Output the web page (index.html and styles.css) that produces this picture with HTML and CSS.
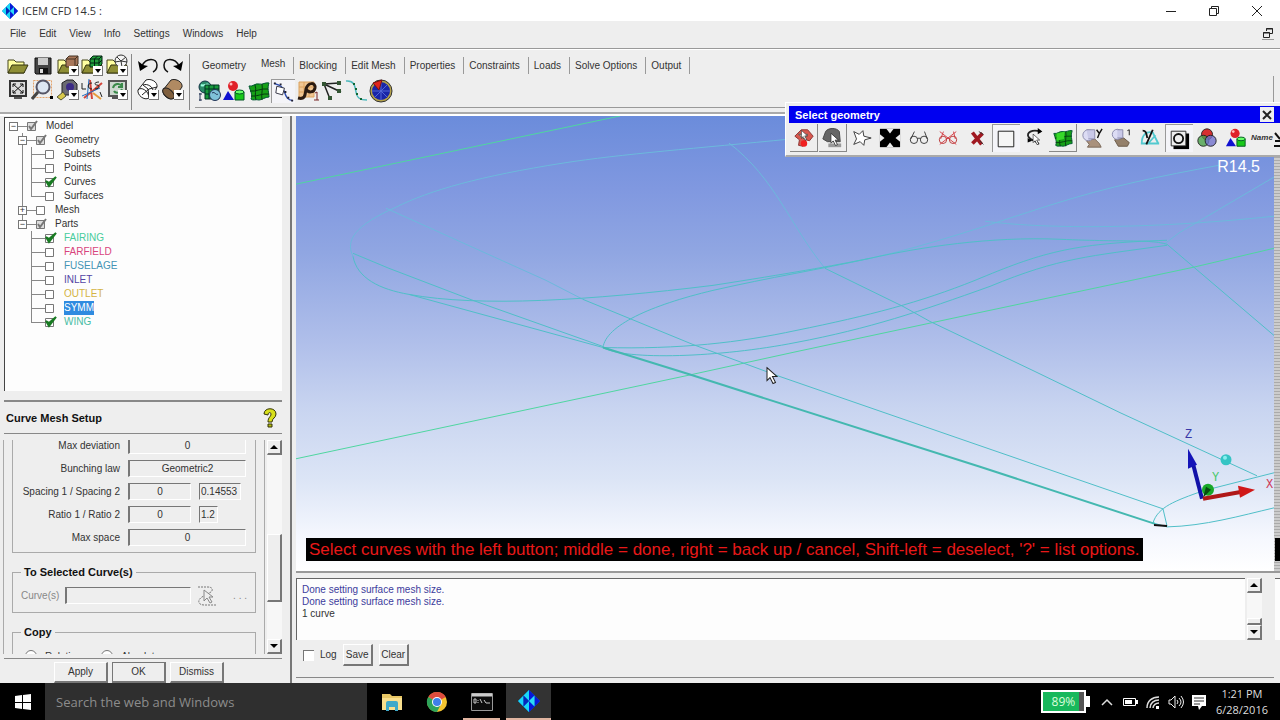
FILE: index.html
```html
<!DOCTYPE html>
<html lang="en">
<head>
  <meta charset="UTF-8">
  <meta name="viewport" content="width=device-width, initial-scale=1.0">
  <title>ICEM CFD 14.5</title>
  <link rel="stylesheet" href="styles.css">
</head>
<body>
  <!-- Shared icon parts -->
  <svg class="defs" width="0" height="0">
    <symbol id="drop" viewBox="0 0 10 10"><path d="M0 0h10v10H0z" fill="#fff"/><path d="M0 9.500h10M9.500 0v10" stroke="#777"/><path d="M2 3h6L5 7z" fill="#000"/></symbol>
    <symbol id="folder" viewBox="0 0 24 24"><path d="M2 6h6l2 2h8v11H2z" fill="#ffffa0" stroke="#44441a"/><path d="M2 19l4-8h16l-4 8z" fill="#8e8e35" stroke="#33330f"/></symbol>
    <symbol id="logo" viewBox="0 0 20 20"><path d="M10 0L0 10l10 10 10-10z" fill="#06c"/><path d="M10 0L5 5l5 5zM0 10l5-5v10zM10 20l-5-5 5-5z" fill="#19d7f7"/><path d="M10 0l5 5-5 5zM20 10l-5-5v10zM10 20l5-5-5-5z" fill="#0818d8"/><path d="M10 10l5-5v10z" fill="#2bdcf5"/><path d="M5 5l5 5-5 5z" fill="#0527b8"/></symbol>
    <symbol id="shapes" viewBox="0 0 24 24"><circle cx="11" cy="7" r="5" fill="#e02028"/><circle cx="9" cy="5" r="1.500" fill="#fbb"/><path d="M1 21l5-9 6 9z" fill="#1010d0"/><path d="M13 13v8h9v-8z" fill="#18c818" stroke="#052"/><ellipse cx="17.500" cy="13" rx="4.500" ry="2" fill="#6f6" stroke="#052"/></symbol>
    <symbol id="surface" viewBox="0 0 24 24"><path d="M2 7c4 1 6-3 10-2s6-2 10-1c-2 5 0 10 0 14-4 0-7 3-10 3-3-1-6 1-8-1 2-4-1-9-2-13z" fill="#16a016" stroke="#053"/><path d="M8 6c2 5-1 10 1 15M15 5c1 5-1 11 0 16M3 12c6 1 11-3 18-2M4 17c6 1 11-3 18-2" fill="none" stroke="#053b10"/></symbol>
    <symbol id="pointer" viewBox="0 0 12 18"><path d="M1 1v13l3-3 3 6 2.500-1-3-6H11z" fill="#fff" stroke="#222"/></symbol>
    <symbol id="up" viewBox="0 0 10 10"><path d="M1 7h8L5 3z"/></symbol>
    <symbol id="down" viewBox="0 0 10 10"><path d="M1 3h8L5 7z"/></symbol>
  </svg>

  <header class="title-bar">
    <svg class="app-logo"><use href="#logo"/></svg>
    <span>ICEM CFD 14.5 :</span>
    <div class="window-buttons">
      <button aria-label="Minimize"><svg viewBox="0 0 12 12"><path d="M1 6.500h10"/></svg></button>
      <button aria-label="Restore"><svg viewBox="0 0 12 12"><path d="M1.500 3.500h7v7h-7zM3.500 3V1.500h7v7H9"/></svg></button>
      <button aria-label="Close"><svg viewBox="0 0 12 12"><path d="M1 1l10 10M11 1L1 11"/></svg></button>
    </div>
  </header>

  <nav class="menu-bar">
    <a href="#">File</a><a href="#">Edit</a><a href="#">View</a><a href="#">Info</a><a href="#">Settings</a><a href="#">Windows</a><a href="#">Help</a>
    <button class="mdi-restore" aria-label="Restore view"><svg viewBox="0 0 12 12"><path d="M1.500 5.500h6v5h-6zM1 6h7M4.500 4V1.500h6v5H8M4 2h7" /></svg></button>
  </nav>

  <div class="ribbon">
    <div class="tool-block files">
      <div class="tool-row">
        <button class="tool" aria-label="Open project"><svg viewBox="0 0 24 24"><use href="#folder"/></svg></button>
        <button class="tool" aria-label="Save project"><svg viewBox="0 0 24 24"><path d="M4 4h16v16H5l-1-1z" fill="#444" stroke="#111"/><path d="M7 4h10v7H7z" fill="#ccc"/><path d="M8 14h9v6H8z" fill="#111"/><path d="M9 15h3v4H9z" fill="#ddd"/></svg></button>
        <button class="tool" aria-label="Open geometry"><svg viewBox="0 0 24 24"><use href="#folder"/><path d="M10 5l3-3h9v8l-3 3h-9z" fill="#a8775a" stroke="#432"/><path d="M10 5h9v8M19 5l3-3" fill="none" stroke="#432"/><use href="#drop" x="13" y="12" width="10" height="10"/></svg></button>
        <button class="tool" aria-label="Open mesh"><svg viewBox="0 0 24 24"><use href="#folder"/><path d="M10 5l3-3h9v8l-3 3h-9z" fill="#21a03c" stroke="#021"/><path d="M10 5h9v8M19 5l3-3M10 9h9l3-3M14.500 13V5l3-3" fill="none" stroke="#021"/><use href="#drop" x="13" y="12" width="10" height="10"/></svg></button>
        <button class="tool" aria-label="Open blocking"><svg viewBox="0 0 24 24"><use href="#folder"/><circle cx="16" cy="7" r="6" fill="#f4f4f4" stroke="#333"/><path d="M10 8l6-1 5-4M16 7l1 6M12 3l4 4 6 1" fill="none" stroke="#333"/><use href="#drop" x="13" y="12" width="10" height="10"/></svg></button>
      </div>
      <div class="tool-row">
        <button class="tool" aria-label="Fit window"><svg viewBox="0 0 24 24"><path d="M4 3h16v15H4z" fill="#ddd" stroke="#333" stroke-width="2"/><path d="M7 6l10 9M17 6L7 15M7 9V6h3M14 6h3v3M7 12v3h3M14 15h3v-3" fill="none" stroke="#111"/><path d="M8 20h8" stroke="#555" stroke-width="2"/></svg></button>
        <button class="tool" aria-label="Box zoom"><svg viewBox="0 0 24 24"><path d="M2.500 2.500h18v17h-18z" fill="none" stroke="#e5a36a" stroke-dasharray="2 1"/><circle cx="12" cy="9" r="6.500" fill="#dde6f2" stroke="#556" stroke-width="2"/><path d="M7 14l-6 7" stroke="#444" stroke-width="3"/><path d="M19 18h3v3h-3z"/></svg></button>
        <button class="tool" aria-label="Measure"><svg viewBox="0 0 24 24"><path d="M6 5l5-3h6l4 4v11H6z" fill="#6b6b73" stroke="#222"/><circle cx="14" cy="9" r="4" fill="#3c2b86"/><path d="M1 19l6-5 3 4-5 4z" fill="#d8c84a" stroke="#553"/><use href="#drop" x="13" y="12" width="10" height="10"/></svg></button>
        <button class="tool" aria-label="Local coordinate system"><svg viewBox="0 0 24 24"><path d="M10 2l2 19M22 5L4 20" stroke="#d4453a" stroke-width="2"/><path d="M2 18l18-8M9 1l-2 20" stroke="#246fc0"/><path d="M2 5v6h4M12 5c-5 0-5 6 0 6M19 4c-5 0-5 3-2 3s3 4-2 4M20 14l2 5" fill="none" stroke="#222"/><path d="M13 15l8 6" stroke="#e59a3c" stroke-width="2"/></svg></button>
        <button class="tool" aria-label="Refresh"><svg viewBox="0 0 24 24"><path d="M4 3h17v15H4z" fill="#cdd8cf" stroke="#555" stroke-width="2"/><path d="M8 10c1-5 7-5 9-2M17 5v4h-4M17 11c-2 5-7 4-8 2" fill="none" stroke="#3a8a4a" stroke-width="2"/><path d="M7 20h7" stroke="#555" stroke-width="2"/><use href="#drop" x="13" y="12" width="10" height="10"/></svg></button>
      </div>
    </div>
    <div class="tool-block edits">
      <div class="tool-row">
        <button class="tool" aria-label="Undo"><svg viewBox="0 0 24 24"><path d="M6 12C10 3 21 4 21 11c0 3-2 6-4 7" fill="none" stroke="#111" stroke-width="1.500"/><path d="M2 7l2 10 8-5-5-1z"/></svg></button>
        <button class="tool" aria-label="Redo"><svg viewBox="0 0 24 24"><path d="M18 12C14 3 3 4 3 11c0 3 2 6 4 7" fill="none" stroke="#111" stroke-width="1.500"/><path d="M22 7l-2 10-8-5 5-1z"/></svg></button>
      </div>
      <div class="tool-row">
        <button class="tool" aria-label="Wireframe"><svg viewBox="0 0 24 24"><path d="M2 12L10 2c5-2 12 2 11 7l-8 11C8 23 1 17 2 12z" fill="#fff" stroke="#222"/><path d="M2 12c3-4 11 1 11 8M7 7c4-2 11 2 10 7M6 17l7-6 8-2M7 7l5 4 1 8" fill="none" stroke="#222"/><use href="#drop" x="13" y="12" width="10" height="10"/></svg></button>
        <button class="tool" aria-label="Solid"><svg viewBox="0 0 24 24"><path d="M2 12L10 2c5-2 12 2 11 7l-8 11C8 23 1 17 2 12z" fill="#b08a62" stroke="#222"/><ellipse cx="7.500" cy="15.500" rx="4" ry="7" transform="rotate(-48 7.500 15.500)" fill="#80603f" stroke="#222"/><use href="#drop" x="13" y="12" width="10" height="10"/></svg></button>
      </div>
    </div>

    <div class="tab-area">
      <div class="tabs">
        <button>Geometry</button>
        <button class="active">Mesh</button>
        <button>Blocking</button>
        <button>Edit Mesh</button>
        <button>Properties</button>
        <button>Constraints</button>
        <button>Loads</button>
        <button>Solve Options</button>
        <button>Output</button>
      </div>
      <div class="tab-panel">
        <div class="tool-row mesh-tools">
          <button class="tool" aria-label="Global mesh setup"><svg viewBox="0 0 24 24"><circle cx="7" cy="8" r="6" fill="#2b8a68" stroke="#134"/><path d="M3 6c4 2 6-3 9 1" fill="none" stroke="#9fd" stroke-width="2"/><path d="M7 6h14v14H7z" fill="#179a3c" stroke="#032"/><path d="M7 10h14M7 15h14M11 6v14M16 6v14" stroke="#032"/><circle cx="17" cy="16" r="5.500" fill="#7fc2d8" stroke="#235"/><path d="M14 14c3-2 4 3 6 1M2 14v8M1 15h3M1 21h3" fill="none" stroke="#235"/></svg></button>
          <button class="tool" aria-label="Part mesh setup"><svg viewBox="0 0 24 24"><use href="#shapes"/></svg></button>
          <button class="tool" aria-label="Surface mesh setup"><svg viewBox="0 0 24 24"><use href="#surface"/></svg></button>
          <button class="tool pressed" aria-label="Curve mesh setup"><svg viewBox="0 0 24 24"><path d="M2 3c7 2 9 3 11 9s3 8 9 9" fill="none" stroke="#2d4cb0" stroke-width="1.500"/><path d="M5 6l8 2-2 7-7-2z" fill="#fff" stroke="#334"/><path d="M2 3h2M8 4h2M13 12h2M16 18h2M20 21h2" stroke="#223" stroke-width="2"/></svg></button>
          <button class="tool" aria-label="Create mesh density"><svg viewBox="0 0 24 24"><path d="M3 3h15v15H3z" fill="#efc592"/><path d="M3 3h15v15H3zM8 3v15M13 3v15M3 8h15M3 13h15" fill="none" stroke="#dca25e"/><path d="M2 19c8 2 7-4 8-9 2-7 10-7 9-1-1 5-7 5-9 1" fill="none" stroke="#2a1a10" stroke-width="3"/><path d="M19 14l2-1v8M18 21h5" fill="none" stroke="#722"/></svg></button>
          <button class="tool" aria-label="Define connectors"><svg viewBox="0 0 24 24"><path d="M4 5l15-1M4 5l17 8M4 5l6 15" fill="none" stroke="#222" stroke-width="1.500"/><path d="M2 3h4v4H2zM17 2h4v4h-4zM17 10h4v4h-4zM8 17h4v4H8z" fill="#353"/></svg></button>
          <button class="tool" aria-label="Mesh curve"><svg viewBox="0 0 24 24"><path d="M1 2c8-1 9 5 10 11s4 8 11 8" fill="none" stroke="#4cb8bc" stroke-width="1.500"/><path d="M8 5h2M10 10h2M11 15h2M15 20h2" stroke="#163" stroke-width="2"/></svg></button>
          <button class="tool" aria-label="Compute mesh"><svg viewBox="0 0 24 24"><circle cx="12" cy="12" r="11" fill="#b5a24a" stroke="#333"/><circle cx="12" cy="12" r="9" fill="#1925a8"/><path d="M12 3v18M3 12h18M6 6l12 12M18 6L6 18" stroke="#5468d5"/><path d="M4 4l9-3-3 10z" fill="#e0251c" stroke="#711"/></svg></button>
        </div>
      </div>
    </div>
  </div>

  <main class="workspace">
    <aside class="side">
      <div class="tree">
        <ul class="root">
          <li>
            <div class="node"><i class="expander">−</i><i class="link"></i><input type="checkbox" class="partial" id="model" checked><label for="model">Model</label></div>
            <ul>
              <li>
                <div class="node"><i class="expander">−</i><i class="link"></i><input type="checkbox" class="partial" id="geometry" checked><label for="geometry">Geometry</label></div>
                <ul class="leaves">
                  <li class="node"><input type="checkbox" id="subsets"><label for="subsets">Subsets</label></li>
                  <li class="node"><input type="checkbox" id="points"><label for="points">Points</label></li>
                  <li class="node"><input type="checkbox" id="curves" checked><label for="curves">Curves</label></li>
                  <li class="node"><input type="checkbox" id="surfaces"><label for="surfaces">Surfaces</label></li>
                </ul>
              </li>
              <li>
                <div class="node"><i class="expander">+</i><i class="link"></i><input type="checkbox" id="mesh"><label for="mesh">Mesh</label></div>
              </li>
              <li>
                <div class="node"><i class="expander">−</i><i class="link"></i><input type="checkbox" class="partial" id="parts" checked><label for="parts">Parts</label></div>
                <ul class="leaves">
                  <li class="node"><input type="checkbox" id="fairing" checked><label class="fairing" for="fairing">FAIRING</label></li>
                  <li class="node"><input type="checkbox" id="farfield"><label class="farfield" for="farfield">FARFIELD</label></li>
                  <li class="node"><input type="checkbox" id="fuselage"><label class="fuselage" for="fuselage">FUSELAGE</label></li>
                  <li class="node"><input type="checkbox" id="inlet"><label class="inlet" for="inlet">INLET</label></li>
                  <li class="node"><input type="checkbox" id="outlet"><label class="outlet" for="outlet">OUTLET</label></li>
                  <li class="node"><input type="checkbox" id="symm"><label class="selected" for="symm">SYMM</label></li>
                  <li class="node"><input type="checkbox" id="wing" checked><label class="wing" for="wing">WING</label></li>
                </ul>
              </li>
            </ul>
          </li>
        </ul>
      </div>

      <div class="setup-title">
        <h2>Curve Mesh Setup</h2>
        <svg viewBox="0 0 14 20"><path d="M1 6c0-7 12-7 12 0 0 4-4 4-4 8H5c0-5 3-5 3-8 0-2-3-2-3 1z" fill="#d8e01c" stroke="#333308"/><path d="M5 16h4v3H5z" fill="#b4bc10" stroke="#333308"/></svg>
      </div>

      <div class="setup-scroll">
        <form class="setup-form">
          <div class="group params">
            <label for="deviation">Max deviation</label><input class="wide" id="deviation" value="0">
            <label for="law">Bunching law</label><input class="wide" id="law" value="Geometric2">
            <label for="spacing">Spacing 1 / Spacing 2</label><input id="spacing" value="0"><input class="spacing2" aria-label="Spacing 2" value="0.14553">
            <label for="ratio">Ratio 1 / Ratio 2</label><input id="ratio" value="0"><input class="ratio2" aria-label="Ratio 2" value="1.2">
            <label for="space">Max space</label><input class="wide" id="space" value="0">
          </div>
          <fieldset class="group">
            <legend>To Selected Curve(s)</legend>
            <div class="curve-row">
              <label for="curve-names">Curve(s)</label>
              <input id="curve-names">
              <button type="button" aria-label="Select curves"><svg viewBox="0 0 20 22"><path d="M1 2h10c6 0 5 5 1 6L5 12c-5 3-4 8 2 8h12" fill="none" stroke="#777" stroke-dasharray="2 1"/><path d="M7 5v11l3-3 3 5 2-1-3-5h4z" fill="#eee" stroke="#888"/></svg></button>
              <span>. . .</span>
            </div>
          </fieldset>
          <fieldset class="group copy">
            <legend>Copy</legend>
            <div class="copy-row">
              <label><input type="radio" name="copy">Relative</label>
              <label><input type="radio" name="copy">Absolute</label>
            </div>
          </fieldset>
        </form>
        <div class="scrollbar">
          <button aria-label="Scroll up"><svg><use href="#up"/></svg></button>
          <div class="thumb"></div>
          <button aria-label="Scroll down"><svg><use href="#down"/></svg></button>
        </div>
      </div>

      <div class="setup-actions">
        <button>Apply</button><button class="default">OK</button><button>Dismiss</button>
      </div>
    </aside>

    <section class="content">
      <div class="viewport">
        <svg class="scene" viewBox="296 116 978 454" preserveAspectRatio="none">
          <!-- far field edges -->
          <g stroke="#4fd6a0">
            <path d="M296 184L620 116"/>
            <path d="M296 458L687 375 797 351 980 312 1193 267 1274 248"/>
          </g>
          <!-- fairing and wing curves -->
          <g class="faint">
            <path d="M790 139C700 148 620 154 563 163 480 176 430 190 396 207 355 225 345 240 353 256"/>
            <path d="M386 208L546 280 583 299"/>
            <path d="M729 143C775 178 790 225 825 268"/>
            <path d="M870 258C930 245 990 224 1050 205S1160 176 1220 165"/>
            <path d="M1274 177L1180 232 1164 244M985 221C1040 228 1140 230 1274 216"/>
          </g>
          <g class="curve">
            <path d="M353 256C357 278 380 289 409 294 480 307 590 300 713 285 790 273 830 266 870 258 920 247 990 236 1060 239S1150 239 1167 244L1274 335"/>
            <path d="M353 253L389 268 473 300 603 346M409 294L603 347"/>
            <path d="M583 299L693 344 780 376 980 445 1163 508"/>
            <path d="M603 347C606 325 650 305 713 290 770 277 820 269 870 258"/>
            <path d="M603 347C680 349 740 342 796 330 870 315 920 302 975 280 1040 253 1070 243 1167 240"/>
            <path d="M603 347C625 360 720 357 796 342 870 328 920 311 990 286 1060 257 1090 256 1167 245"/>
            <path d="M825 268L903 306 930 321 1033 370 1120 412 1257 475"/>
            <path d="M1274 472L1203 490C1175 500 1158 506 1153 522L1167 526C1205 525 1240 515 1274 507M1163 508L1167 525"/>
            <path class="leading-edge" d="M603 347L690 374 980 466 1155 523"/>
          </g>
          <path d="M1154 524L1167 525" stroke="#111" stroke-width="2"/>
          <!-- axis triad -->
          <circle cx="1226" cy="459" r="5.500" fill="#35c4c4"/><circle cx="1225" cy="457" r="2" fill="#8ee"/>
          <path d="M1202 498L1193 463" stroke="#1212a8" stroke-width="4"/><path d="M1188 448l9 16-9 4z" fill="#1414b8"/>
          <circle cx="1208" cy="489" r="6" fill="#18a828"/><path d="M1203 497l3-11 5 3z" fill="#074b10"/>
          <path d="M1203 498L1242 491" stroke="#b01818" stroke-width="4"/><path d="M1255 489l-17-4 2 12z" fill="#d01818"/>
          <g class="axis-labels"><text x="1185" y="437" fill="#3838a8">Z</text><text x="1212" y="480" fill="#48c868">Y</text><text x="1266" y="487" fill="#d03858">X</text></g>
          <use href="#pointer" x="766" y="366" width="12" height="18"/>
        </svg>
        <span class="release">R14.5</span>
        <p class="prompt">Select curves with the left button; middle = done, right = back up / cancel, Shift-left = deselect, '?' = list options.</p>
      </div>
      <div class="edge"><span></span></div>

      <div class="messages">
        <div class="log-pane">
          <div class="log-text">
            <p class="info">Done setting surface mesh size.</p>
            <p class="info">Done setting surface mesh size.</p>
            <p>1 curve</p>
          </div>
          <div class="scrollbar">
            <button aria-label="Scroll up"><svg><use href="#up"/></svg></button>
            <div class="thumb"></div>
            <button aria-label="Scroll down"><svg><use href="#down"/></svg></button>
          </div>
        </div>
        <div class="log-actions">
          <input type="checkbox" id="log"><label for="log">Log</label>
          <button>Save</button><button>Clear</button>
        </div>
      </div>
      <div class="messages-edge"><span></span></div>
    </section>
  </main>

  <footer class="taskbar">
    <button class="start" aria-label="Start"><svg viewBox="0 0 16 16"><path d="M0 2l7-1v7H0zM8 1l8-1v8H8zM0 9h7v6l-7-1zM8 9h8v7l-8-1z" fill="#fff"/></svg></button>
    <input class="search" type="text" placeholder="Search the web and Windows" aria-label="Search">
    <button class="task" aria-label="File Explorer"><svg viewBox="0 0 22 20"><path d="M1 2h8l2 2h10v14H1z" fill="#e8c765"/><path d="M1 6h20v12H1z" fill="#f9df8e"/><path d="M5 11q0-2 2-2h8q2 0 2 2v8h-3v-4H8v4H5z" fill="#3fa9c9"/></svg></button>
    <button class="task" aria-label="Chrome"><svg viewBox="0 0 22 22"><circle cx="11" cy="11" r="10" fill="#f4c430"/><path d="M11 11L2.300 6A10 10 0 0 1 19.700 6z" fill="#dd4b3e"/><path d="M2.300 6A10 10 0 0 0 11 21l4-8-4-2z" fill="#2da45a"/><circle cx="11" cy="11" r="5" fill="#fff"/><circle cx="11" cy="11" r="4" fill="#3f7fe8"/></svg></button>
    <button class="task open" aria-label="Command Prompt"><svg viewBox="0 0 22 20"><path d="M.5 1.500h21v17H.5z" fill="#0c0c0c" stroke="#999"/><path d="M1 3h20" stroke="#ccc" stroke-width="3"/><path d="M3 7v4M3 7h2v4H3M7 8v1M7 10v1M9 7l2 4M13 8l2 3M15 11h4" fill="none" stroke="#ccc"/></svg></button>
    <button class="task current" aria-label="ICEM CFD"><svg><use href="#logo"/></svg></button>
    <div class="tray">
      <div class="battery"><span>89%</span></div>
      <svg class="tray-icon" viewBox="0 0 16 16"><path d="M3 11l5-5 5 5" fill="none" stroke="#ddd" stroke-width="1.500"/></svg>
      <svg class="tray-icon" viewBox="0 0 16 16"><path d="M1.500 4.500h12v7h-12z" fill="none" stroke="#fff"/><path d="M3 6h7v4H3zM14 6h2v4h-2z" fill="#fff"/></svg>
      <svg class="tray-icon" viewBox="0 0 16 16"><path d="M2 14C2 7 7 3 14 3M5 14c0-5 4-8 9-8M8 14c0-3 3-5 6-5" fill="none" stroke="#ddd" stroke-width="1.500"/><path d="M11 12h3v3h-3z" fill="#fff"/></svg>
      <svg class="tray-icon" viewBox="0 0 16 16"><path d="M1 6h2l4-4v12l-4-4H1zM9 6q2 2 0 4M11 4q4 4 0 8M13 2q5 6 0 12" fill="none" stroke="#eee"/></svg>
      <svg class="tray-icon" viewBox="0 0 16 16"><path d="M1 1h14v11h-4l-3 4-1-4H1z" fill="#fff"/><path d="M3 4h10M3 7h10M3 10h6" stroke="#333"/></svg>
      <div class="clock"><span>1:21 PM</span><span>6/28/2016</span></div>
    </div>
  </footer>

  <!-- Floating selection toolbar -->
  <div class="select-window">
    <div class="select-title"><h2>Select geometry</h2><button aria-label="Close"><svg viewBox="0 0 12 12"><path d="M2 2l8 8M10 2l-8 8"/></svg></button></div>
    <div class="select-tools">
      <button class="tool raised" aria-label="Select all appropriate objects"><svg viewBox="0 0 24 24"><path d="M2 10l7-7h7l6 7-4 5-4-1-3 7-5-1 1-6z" fill="#d8584e" stroke="#833"/><path d="M6 8h10l-4 5z" fill="#f8e8c0" stroke="#555"/><circle cx="12" cy="18" r="3.500" fill="#f02020"/><use href="#pointer" x="8" y="3" width="9" height="12"/></svg></button>
      <button class="tool raised" aria-label="Toggle dynamics"><svg viewBox="0 0 24 24"><path d="M5 5c2-4 12-5 15 0l1 11H7l-5-3z" fill="#666" stroke="#444"/><path d="M8 18h14v4H8z" fill="#999"/><use href="#pointer" x="10" y="6" width="10" height="15"/></svg></button>
      <button class="tool" aria-label="Polygon select"><svg viewBox="0 0 24 24"><path d="M3 5l6 3 4-4 1 6 8 2-7 2-1 6-4-4-7 3 3-6z" fill="#fff" stroke="#333"/></svg></button>
      <button class="tool" aria-label="Select all"><svg viewBox="0 0 24 24"><path d="M1 2h22v20H1z"/><path d="M8 2h8l-4 5zM8 22h8l-4-5zM1 8v8l5-4zM23 8v8l-5-4z" fill="#eee"/></svg></button>
      <button class="tool" aria-label="Visible only"><svg viewBox="0 0 24 24"><path d="M3 13l4-8M21 13l-3-8M10 13q2-2 4 0" fill="none" stroke="#333"/><circle cx="6.500" cy="14" r="4" fill="none" stroke="#333"/><circle cx="17.500" cy="14" r="4" fill="none" stroke="#333"/></svg></button>
      <button class="tool" aria-label="Visible off"><svg viewBox="0 0 24 24"><path d="M4 13l3-8M20 13l-2-8M10 13q2-2 4 0M3 5l18 14M21 5L3 19" fill="none" stroke="#d43a42"/><circle cx="6.500" cy="14" r="4" fill="none" stroke="#b33"/><circle cx="17.500" cy="14" r="4" fill="none" stroke="#b33"/></svg></button>
      <button class="tool" aria-label="Cancel selection"><svg viewBox="0 0 24 24"><path d="M7 6l10 13M18 7L7 18" stroke="#a01820" stroke-width="4"/><path d="M14 5l5 3M15 15l4 4" stroke="#333"/></svg></button>
      <button class="tool pressed" aria-label="Entire curve"><svg viewBox="0 0 24 24"><path d="M3.500 3.500h17v17h-17z" fill="#f5f5f5" stroke="#111"/></svg></button>
      <button class="tool" aria-label="Flood fill"><svg viewBox="0 0 24 24"><path d="M18 5C9 2 2 6 5 11s9 3 11 8" fill="none" stroke="#222" stroke-width="2"/><path d="M15 1l5 4-5 3zM4 12l5 3-5 2z"/><use href="#pointer" x="9" y="7" width="9" height="13"/></svg></button>
      <button class="tool raised" aria-label="Select surface"><svg viewBox="0 0 24 24"><use href="#surface"/><path d="M5 7l9-2-1 8-8 2z" fill="#38d82a"/></svg></button>
      <button class="tool" aria-label="Attached to geometry"><svg viewBox="0 0 24 24"><path d="M6 15l9-2 5 5 2 4H7l2-3z" fill="#a9917c" stroke="#765"/><circle cx="8" cy="9" r="6" fill="#dcdcf4" stroke="#88a"/><path d="M6 3h9v10H8" fill="#c9c9e8" stroke="#88a"/><path d="M17 3l3 4 3-5M20 7l-2 5" fill="none" stroke="#111" stroke-width="1.500"/></svg></button>
      <button class="tool" aria-label="Attached up to"><svg viewBox="0 0 24 24"><path d="M5 14l10-2 6 5-2 4H9z" fill="#94806a" stroke="#654"/><circle cx="8" cy="8" r="5.500" fill="#dcdcf4" stroke="#88a"/><path d="M8 3h6v9H8" fill="#c9c9e8" stroke="#88a"/><path d="M19 4l2-1v6" fill="none" stroke="#111"/></svg></button>
      <button class="tool" aria-label="Feature angle"><svg viewBox="0 0 24 24"><path d="M2 18h20M3 18C3 9 8 4 15 6l6 12M10 18l8-9" fill="none" stroke="#53c9cf" stroke-width="2"/><path d="M4 4c4 0 4 3 5 8M15 3L8 19" fill="none" stroke="#111" stroke-width="2"/></svg></button>
      <button class="tool pressed" aria-label="Segments"><svg viewBox="0 0 24 24"><path d="M6 6h17v17H6z"/><path d="M3.500 3.500h16v16h-16z" fill="#eee" stroke="#222"/><circle cx="11.500" cy="11.500" r="5" fill="none" stroke="#111" stroke-width="2"/></svg></button>
      <button class="tool" aria-label="By part"><svg viewBox="0 0 24 24"><circle cx="12" cy="8" r="6" fill="#d83030" stroke="#222"/><circle cx="8" cy="15" r="6" fill="#48a048" fill-opacity=".8" stroke="#222"/><circle cx="16" cy="15" r="6" fill="#7070cc" fill-opacity=".8" stroke="#222"/></svg></button>
      <button class="tool" aria-label="By type"><svg viewBox="0 0 24 24"><use href="#shapes"/></svg></button>
      <button class="tool name">Name</button>
      <button class="more" aria-label="More"><svg viewBox="0 0 6 20"><path d="M1 5l5 6M1 13h5M0 18h6" stroke="#111" stroke-width="2"/></svg></button>
    </div>
  </div>
</body>
</html>
```

FILE: styles.css
```css
* {
  box-sizing: border-box;
}

body {
  margin: 0;
  height: 100vh;
  display: flex;
  flex-direction: column;
  overflow: hidden;
  background: #eee;
  color: #333;
  font-family: "Liberation Sans", Arial, sans-serif;
  font-size: 10px;
  line-height: 14px;
}

button,
input {
  font: inherit;
  color: inherit;
  margin: 0;
  padding: 0;
  border: none;
  border-radius: 0;
  background: none;
}

button {
  display: flex;
  align-items: center;
  justify-content: center;
}

h2,
p,
ul {
  margin: 0;
  padding: 0;
}

.defs {
  position: absolute;
}

/* Title and menu */
.title-bar {
  flex: none;
  display: flex;
  align-items: center;
  height: 21px;
  padding-left: 2px;
  gap: 4px;
  background: #fff;
  font-family: "Open Sans", sans-serif;
  font-size: 11px;
}

.app-logo {
  width: 16px;
  height: 16px;
}

.window-buttons {
  display: flex;
  margin-left: auto;
  margin-right: 2px;
}

.window-buttons button {
  width: 43px;
}

.window-buttons svg,
.mdi-restore svg,
.select-title svg {
  width: 12px;
  height: 12px;
  fill: none;
  stroke: #222;
}

.menu-bar {
  flex: none;
  display: flex;
  align-items: center;
  gap: 13px;
  height: 28px;
  padding: 0 6px 2px 10px;
  border-bottom: 1px solid #999;
}

.menu-bar a {
  color: #333;
  text-decoration: none;
}

.mdi-restore {
  margin-left: auto;
  border-bottom: 1px solid #999;
}

/* Ribbon */
.ribbon {
  flex: none;
  display: flex;
  height: 67px;
  padding: 4px 0 3px 6px;
  border-top: 1px solid #fff;
  border-bottom: 2px solid #fff;
  background: linear-gradient(#aaa, #aaa) 0 100% / 100% 2px no-repeat;
}

.tool-block {
  display: flex;
  flex-direction: column;
  height: 56px;
  border-right: 1px solid #888;
}

.tool-row {
  display: flex;
  justify-content: space-between;
}

.files {
  width: 126px;
  padding-right: 2px;
}

.edits {
  width: 58px;
  padding: 0 4px;
}

.tool {
  width: 24px;
  height: 24px;
}

.tool svg {
  width: 24px;
  height: 24px;
}

.pressed {
  border-top: 1px solid #999;
  border-left: 1px solid #999;
  background: #f4f4f8;
}

.raised {
  border-right: 1px solid #888;
  border-bottom: 1px solid #888;
}

.tab-area {
  flex: 1;
  margin-left: 5px;
  margin-right: 6px;
  display: flex;
  flex-direction: column;
}

.tabs {
  display: flex;
  height: 22px;
  padding-top: 3px;
}

.tabs button {
  height: 17px;
  padding: 0 8px 0 5px;
  border-right: 1px solid #999;
}

.tabs button:first-child {
  padding: 0 7px;
  border-right: none;
}

.tabs .active {
  padding: 0 8px 3px;
}

.tab-panel {
  height: 32px;
  border-right: 1px solid #999;
  border-bottom: 1px solid #999;
}

.mesh-tools {
  width: 198px;
  padding: 3px 0 0 3px;
}

/* Side panel */
.workspace {
  flex: 1;
  display: flex;
  min-height: 0;
}

.side {
  flex: none;
  width: 292px;
  display: flex;
  flex-direction: column;
  padding: 1px 8px 0 4px;
  border-right: 2px solid #777;
}

.tree {
  flex: 1;
  margin-bottom: 9px;
  padding: 1px 0 0 4px;
  border-top: 1px solid #444;
  border-left: 1px solid #444;
  background: #fdfdfd;
}

.tree ul {
  list-style: none;
}

.node {
  display: flex;
  align-items: center;
  height: 14px;
}

.root ul {
  margin-left: 9px;
}

.root ul > li {
  background: linear-gradient(#888, #888) 4px 0 / 1px 100% no-repeat;
}

.root ul > li:last-child {
  background-size: 1px 7px;
}

.root .leaves > li {
  padding-left: 18px;
  background: linear-gradient(#888, #888) 4px 0 / 1px 100% no-repeat, linear-gradient(#888, #888) 4px 50% / 14px 1px no-repeat;
}

.root .leaves > li:last-child {
  background-size: 1px 7px, 14px 1px;
}

.expander {
  width: 9px;
  height: 9px;
  border: 1px solid #777;
  background: #fff;
  font-style: normal;
  font-size: 9px;
  line-height: 7px;
  text-align: center;
}

.link {
  width: 9px;
  height: 1px;
  background: #888;
}

.tree input {
  appearance: none;
  width: 13px;
  height: 12px;
  margin-right: 6px;
  background: url("data:image/svg+xml,%3Csvg xmlns='http://www.w3.org/2000/svg' width='13' height='12'%3E%3Cpath d='M.5 2.500h8v8h-8z' fill='%23fff' stroke='%23777'/%3E%3C/svg%3E");
}

.tree input:checked {
  background: url("data:image/svg+xml,%3Csvg xmlns='http://www.w3.org/2000/svg' width='13' height='12'%3E%3Cpath d='M.5 2.500h8v8h-8z' fill='%23fff' stroke='%23777'/%3E%3Cpath d='M1 5l3 2 7-6-7 9z' fill='%23187a22' stroke='%23187a22' stroke-width='2'/%3E%3C/svg%3E");
}

.tree .partial:checked {
  background: url("data:image/svg+xml,%3Csvg xmlns='http://www.w3.org/2000/svg' width='13' height='12'%3E%3Cpath d='M.5 2.500h8v8h-8z' fill='%23ddd' stroke='%23777'/%3E%3Cpath d='M2 6l2 3 6-8' fill='none' stroke='%23777' stroke-width='2'/%3E%3C/svg%3E");
}

.fairing { color: #48cc9c; }
.farfield { color: #d8447c; }
.fuselage { color: #4494b4; }
.inlet { color: #5444a4; }
.outlet { color: #d4b444; }
.wing { color: #48bca4; }

.selected {
  background: #2f8be0;
  color: #fff;
}

.setup-title {
  display: flex;
  align-items: center;
  justify-content: space-between;
  height: 34px;
  padding: 0 5px 0 2px;
  border-top: 2px solid #888;
  border-bottom: 1px solid #888;
}

.setup-title h2 {
  font-size: 11px;
  color: #111;
}

.setup-title svg {
  width: 14px;
  height: 20px;
}

.setup-scroll {
  display: flex;
  justify-content: space-between;
  height: 214px;
  margin-top: 6px;
  margin-left: -1px;
  overflow: hidden;
}

.setup-form {
  width: 262px;
  padding: 0 8px;
  border-left: 1px solid #aaa;
  border-right: 1px solid #aaa;
}

.group {
  min-width: 0;
  margin: 0 0 12px;
  padding: 0 8px;
  border: 1px solid #aaa;
}

.group input {
  height: 17px;
  min-width: 0;
  border-top: 1px solid #777;
  border-left: 2px solid #777;
  border-right: 1px solid #fff;
  border-bottom: 1px solid #fff;
  text-align: center;
}

.params {
  display: grid;
  grid-template-columns: 107px 63px 47px;
  column-gap: 8px;
  row-gap: 6px;
  margin-top: -10px;
  padding: 6px 8px 6px 0;
}

.params label {
  text-align: right;
  line-height: 17px;
  white-space: nowrap;
}

.params .wide {
  grid-column: 2 / 4;
}

.group .spacing2,
.group .ratio2 {
  justify-self: start;
  text-align: left;
  border-left-width: 1px;
  padding-left: 1px;
}

.params .spacing2 {
  width: 42px;
}

.params .ratio2 {
  width: 19px;
}

legend {
  padding: 0 3px;
  font-size: 11px;
  font-weight: bold;
  color: #111;
}

.curve-row {
  display: flex;
  align-items: center;
  gap: 6px;
  height: 33px;
  color: #888;
}

.curve-row input {
  width: 126px;
}

.curve-row svg {
  width: 20px;
  height: 22px;
}

.curve-row span {
  margin-left: auto;
}

.copy {
  height: 50px;
}

.copy-row {
  display: flex;
  gap: 20px;
  padding: 11px 4px 0;
}

.copy label {
  display: flex;
  gap: 8px;
}

.copy input {
  width: 12px;
  height: 12px;
}

.scrollbar {
  width: 15px;
  display: flex;
  flex-direction: column;
  background: #f7f7f7;
}

.scrollbar button,
.thumb,
.setup-actions button,
.log-actions button {
  background: #eee;
  border-top: 1px solid #fff;
  border-left: 1px solid #fff;
  border-right: 2px solid #777;
  border-bottom: 2px solid #777;
}

.scrollbar button {
  flex: none;
  height: 15px;
}

.scrollbar svg {
  width: 10px;
  height: 10px;
}

.thumb {
  height: 68px;
  margin-top: auto;
  margin-bottom: 37px;
}

.setup-actions {
  display: flex;
  justify-content: center;
  gap: 4px;
  margin-top: 4px;
  padding: 3px 8px 0 0;
  border-top: 1px solid #888;
}

.setup-actions button {
  width: 54px;
  height: 21px;
}

.setup-actions .default {
  border-top-color: #777;
  border-left-color: #777;
}

/* 3D view and messages */
.content {
  flex: 1;
  display: grid;
  grid-template-columns: 1fr 6px;
  grid-template-rows: 1fr 112px;
  padding-left: 4px;
  min-width: 0;
}

.viewport {
  position: relative;
  display: flex;
  flex-direction: column;
  justify-content: space-between;
  align-items: flex-start;
  padding: 42px 14px 10px 10px;
  background: linear-gradient(#6b8cdb, #8098e0 16%, #90a6e2 30%, #b0bfea 50%, #c8d4f0 64%, #dce5f6 80%, #f6f8fe 93%, #fff);
}

.scene {
  position: absolute;
  top: 0;
  left: 0;
  width: 100%;
  height: 100%;
}

.scene path {
  vector-effect: non-scaling-stroke;
}

.scene g {
  fill: none;
}

.faint {
  stroke: #6cb9dc;
}

.curve {
  stroke: #50bfc8;
}

.leading-edge {
  stroke: #44b8b0;
  stroke-width: 2;
}

.axis-labels {
  font-family: "Liberation Mono", monospace;
  font-size: 12px;
}

.release {
  position: relative;
  align-self: flex-end;
  color: #fff;
  font-size: 16px;
  line-height: 18px;
}

.prompt {
  position: relative;
  padding: 0 3px;
  background: #000;
  color: #e81818;
  font-size: 17px;
  line-height: 23px;
  white-space: nowrap;
}

.edge {
  display: flex;
  flex-direction: column;
  justify-content: flex-end;
  padding: 0 0 10px 1px;
  background: repeating-linear-gradient(#ccc, #ccc 2px, #aaa 2px, #aaa 3px);
}

.edge span {
  height: 23px;
  background: #000;
}

.messages,
.messages-edge {
  border-top: 2px solid #999;
  padding-top: 5px;
}

.messages {
  display: flex;
  flex-direction: column;
  background: linear-gradient(#888, #888) 0 104px / 100% 1px no-repeat;
}

.log-pane {
  display: flex;
  gap: 2px;
  height: 62px;
  margin-right: 12px;
}

.log-text {
  flex: 1;
  padding: 5px 5px;
  border-top: 1px solid #666;
  border-left: 1px solid #666;
  background: #fdfdfd;
  line-height: 12px;
}

.info {
  color: #3c3c9c;
}

.log-pane .thumb {
  height: 7px;
  margin-bottom: 0;
}

.log-actions {
  display: flex;
  align-items: center;
  gap: 6px;
  padding: 4px 0 0 7px;
}

.log-actions input {
  appearance: none;
  width: 11px;
  height: 11px;
  border-top: 1px solid #777;
  border-left: 1px solid #777;
  background: #fff;
}

.log-actions button {
  width: 30px;
  height: 22px;
}

.messages-edge span {
  display: block;
  height: 62px;
  margin-left: 1px;
  border-top: 1px solid #666;
  background: #fdfdfd;
}

/* Taskbar */
.taskbar {
  flex: none;
  display: flex;
  height: 37px;
  background: #000;
  font-family: "Open Sans", sans-serif;
}

.start {
  width: 45px;
}

.start svg {
  width: 16px;
  height: 16px;
}

.search {
  width: 322px;
  margin-right: 2px;
  padding: 0 11px;
  background: #2f2f2f;
  font-size: 13px;
}

.search::placeholder {
  color: #8c8c8c;
}

.task {
  width: 45px;
  padding-top: 1px;
}

.task svg {
  width: 22px;
  height: 22px;
}

.open {
  background: linear-gradient(#e0b4a0, #e0b4a0) 50% 100% / 37px 2px no-repeat;
}

.current {
  margin-left: 2px;
  background: #333;
  border-bottom: 2px solid #e0b4a0;
}

.tray {
  display: flex;
  align-items: center;
  gap: 7px;
  margin-left: auto;
  padding-right: 12px;
}

.battery {
  position: relative;
  width: 45px;
  height: 23px;
  margin-right: 6px;
  border: 2px solid #fff;
  background: linear-gradient(90deg, #18b85c 88%, #555 88%);
  color: #dfd;
  font-size: 12px;
  line-height: 19px;
  text-align: center;
}

.battery::after {
  content: "";
  position: absolute;
  top: 4px;
  right: -6px;
  width: 4px;
  height: 11px;
  background: #fff;
}

.tray-icon {
  width: 16px;
  height: 16px;
}

.clock {
  display: flex;
  flex-direction: column;
  align-items: center;
  margin-left: 2px;
  color: #ddd;
  font-size: 11px;
  line-height: 16px;
}

/* Floating window above the view */
.select-window {
  position: absolute;
  top: 102px;
  right: 0;
  width: 495px;
  padding: 3px 0 3px 3px;
  border-top: 1px solid #fff;
  border-left: 1px solid #fff;
  border-bottom: 2px solid #aaa;
  background: #eee;
}

.select-title {
  display: flex;
  align-items: center;
  justify-content: space-between;
  height: 17px;
  padding: 0 6px;
  background: #0000f0;
}

.select-title h2 {
  font-size: 11px;
  color: #fff;
}

.select-title button {
  width: 14px;
  height: 15px;
  background: #eee;
}

.select-title path {
  stroke-width: 2;
}

.select-tools {
  display: flex;
  justify-content: space-between;
  padding: 1px 0 0 1px;
}

.select-tools .tool {
  width: 28px;
  height: 28px;
}

.select-tools svg {
  width: 22px;
  height: 22px;
}

.select-tools .name {
  width: 22px;
  font-size: 8px;
  font-style: italic;
  font-weight: bold;
}

.select-tools .more {
  width: 6px;
}

.more svg {
  width: 6px;
}
```
